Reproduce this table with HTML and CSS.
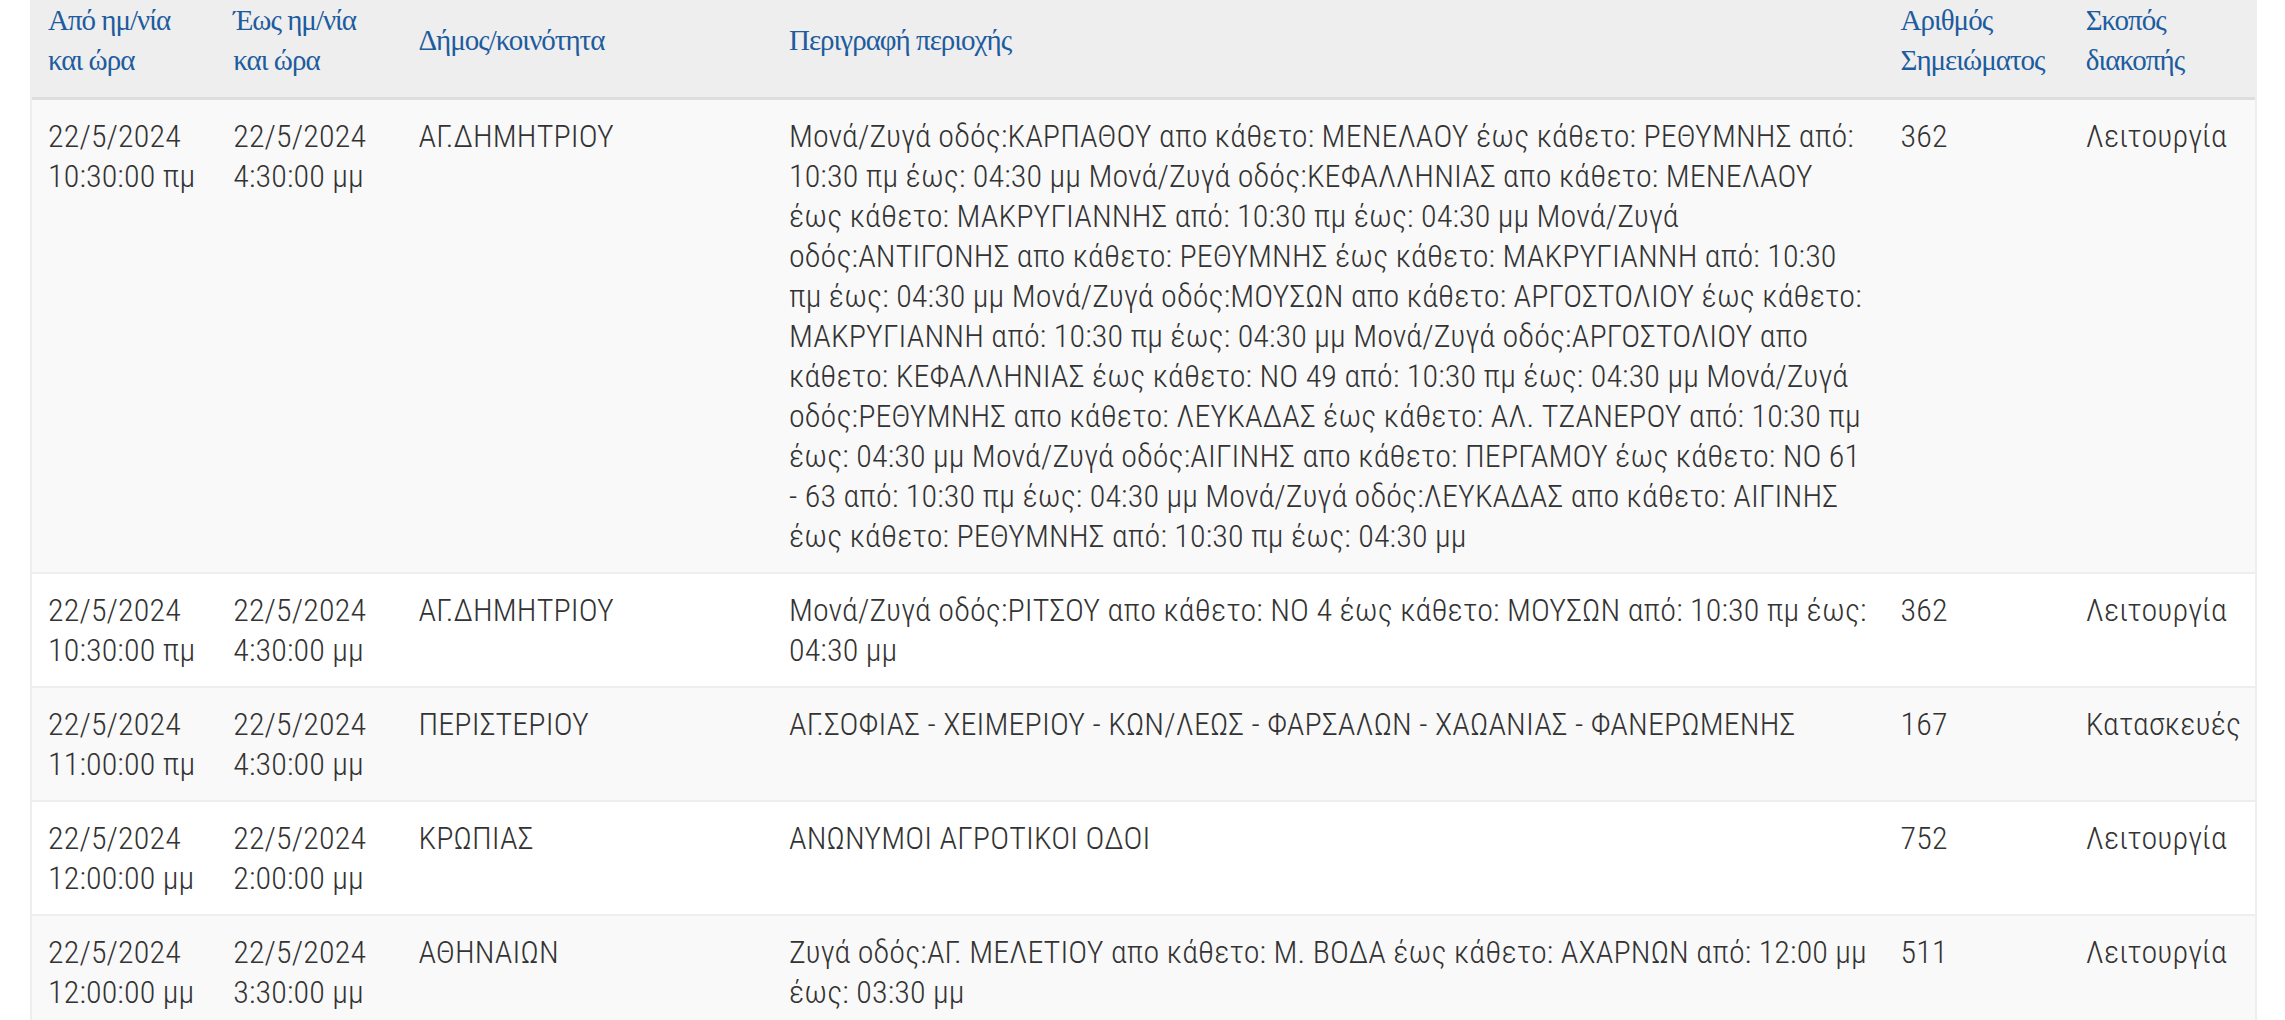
FILE: index.html
```html
<!DOCTYPE html>
<html lang="el">
<head>
<meta charset="utf-8">
<title>Διακοπές ρεύματος</title>
<link rel="stylesheet" href="styles.css">
</head>
<body>
<div class="page">
  <table class="outages">
    <colgroup>
      <col class="c-narrow">
      <col class="c-narrow">
      <col class="c-mid">
      <col class="c-wide">
      <col class="c-narrow">
      <col class="c-narrow">
    </colgroup>
    <thead>
      <tr>
        <th>Από ημ/νία και ώρα</th>
        <th>Έως ημ/νία και ώρα</th>
        <th>Δήμος/κοινότητα</th>
        <th>Περιγραφή περιοχής</th>
        <th>Αριθμός Σημειώματος</th>
        <th>Σκοπός διακοπής</th>
      </tr>
    </thead>
    <tbody>
      <tr>
        <td>22/5/2024 10:30:00 πμ</td>
        <td>22/5/2024 4:30:00 μμ</td>
        <td>ΑΓ.ΔΗΜΗΤΡΙΟΥ</td>
        <td>Μονά/Ζυγά οδός:ΚΑΡΠΑΘΟΥ απο κάθετο: ΜΕΝΕΛΑΟΥ έως κάθετο: ΡΕΘΥΜΝΗΣ από: 10:30 πμ έως: 04:30 μμ Μονά/Ζυγά οδός:ΚΕΦΑΛΛΗΝΙΑΣ απο κάθετο: ΜΕΝΕΛΑΟΥ έως κάθετο: ΜΑΚΡΥΓΙΑΝΝΗΣ από: 10:30 πμ έως: 04:30 μμ Μονά/Ζυγά οδός:ΑΝΤΙΓΟΝΗΣ απο κάθετο: ΡΕΘΥΜΝΗΣ έως κάθετο: ΜΑΚΡΥΓΙΑΝΝΗ από: 10:30 πμ έως: 04:30 μμ Μονά/Ζυγά οδός:ΜΟΥΣΩΝ απο κάθετο: ΑΡΓΟΣΤΟΛΙΟΥ έως κάθετο: ΜΑΚΡΥΓΙΑΝΝΗ από: 10:30 πμ έως: 04:30 μμ Μονά/Ζυγά οδός:ΑΡΓΟΣΤΟΛΙΟΥ απο κάθετο: ΚΕΦΑΛΛΗΝΙΑΣ έως κάθετο: ΝΟ 49 από: 10:30 πμ έως: 04:30 μμ Μονά/Ζυγά οδός:ΡΕΘΥΜΝΗΣ απο κάθετο: ΛΕΥΚΑΔΑΣ έως κάθετο: ΑΛ. ΤΖΑΝΕΡΟΥ από: 10:30 πμ έως: 04:30 μμ Μονά/Ζυγά οδός:ΑΙΓΙΝΗΣ απο κάθετο: ΠΕΡΓΑΜΟΥ έως κάθετο: ΝΟ 61 - 63 από: 10:30 πμ έως: 04:30 μμ Μονά/Ζυγά οδός:ΛΕΥΚΑΔΑΣ απο κάθετο: ΑΙΓΙΝΗΣ έως κάθετο: ΡΕΘΥΜΝΗΣ από: 10:30 πμ έως: 04:30 μμ</td>
        <td>362</td>
        <td>Λειτουργία</td>
      </tr>
      <tr>
        <td>22/5/2024 10:30:00 πμ</td>
        <td>22/5/2024 4:30:00 μμ</td>
        <td>ΑΓ.ΔΗΜΗΤΡΙΟΥ</td>
        <td>Μονά/Ζυγά οδός:ΡΙΤΣΟΥ απο κάθετο: ΝΟ 4 έως κάθετο: ΜΟΥΣΩΝ από: 10:30 πμ έως: 04:30 μμ</td>
        <td>362</td>
        <td>Λειτουργία</td>
      </tr>
      <tr>
        <td>22/5/2024 11:00:00 πμ</td>
        <td>22/5/2024 4:30:00 μμ</td>
        <td>ΠΕΡΙΣΤΕΡΙΟΥ</td>
        <td>ΑΓ.ΣΟΦΙΑΣ - ΧΕΙΜΕΡΙΟΥ - ΚΩΝ/ΛΕΩΣ - ΦΑΡΣΑΛΩΝ - ΧΑΩΑΝΙΑΣ - ΦΑΝΕΡΩΜΕΝΗΣ</td>
        <td>167</td>
        <td>Κατασκευές</td>
      </tr>
      <tr>
        <td>22/5/2024 12:00:00 μμ</td>
        <td>22/5/2024 2:00:00 μμ</td>
        <td>ΚΡΩΠΙΑΣ</td>
        <td>ΑΝΩΝΥΜΟΙ ΑΓΡΟΤΙΚΟΙ ΟΔΟΙ</td>
        <td>752</td>
        <td>Λειτουργία</td>
      </tr>
      <tr>
        <td>22/5/2024 12:00:00 μμ</td>
        <td>22/5/2024 3:30:00 μμ</td>
        <td>ΑΘΗΝΑΙΩΝ</td>
        <td>Ζυγά οδός:ΑΓ. ΜΕΛΕΤΙΟΥ απο κάθετο: Μ. ΒΟΔΑ έως κάθετο: ΑΧΑΡΝΩΝ από: 12:00 μμ έως: 03:30 μμ</td>
        <td>511</td>
        <td>Λειτουργία</td>
      </tr>
    </tbody>
  </table>
</div>
</body>
</html>
```
FILE: styles.css
```css
html {
  overflow: hidden;
}

body {
  margin: 0;
  background: #ffffff;
}

.page {
  padding: 0 28px 0 30px;
}

.outages {
  width: 100%;
  table-layout: fixed;
  border-collapse: separate;
  border-spacing: 0;
  border: 2px solid #eeeeee;
  border-top: 0;
}

.c-narrow { width: 8.3333%; }
.c-mid { width: 16.6667%; }
.c-wide { width: 50%; }

.outages th {
  font-family: "Liberation Serif", "Times New Roman", serif;
  font-weight: normal;
  font-size: 29px;
  letter-spacing: -1px;
  line-height: 40px;
  color: #1d5c9e;
  text-align: left;
  vertical-align: middle;
  background: #eeeeee;
  padding: 0 16px 17px;
  border-bottom: 3px solid #dddddd;
}

.outages td {
  font-family: "Roboto Condensed", Roboto, sans-serif;
  font-stretch: condensed;
  font-weight: 300;
  font-size: 32px;
  letter-spacing: 0.13px;
  line-height: 40px;
  color: #333333;
  vertical-align: top;
  padding: 16px;
  background: #f9f9f9;
}

.outages tbody tr:nth-child(even) td {
  background: #ffffff;
}

.outages tbody tr + tr td {
  border-top: 2px solid #eeeeee;
}
```
